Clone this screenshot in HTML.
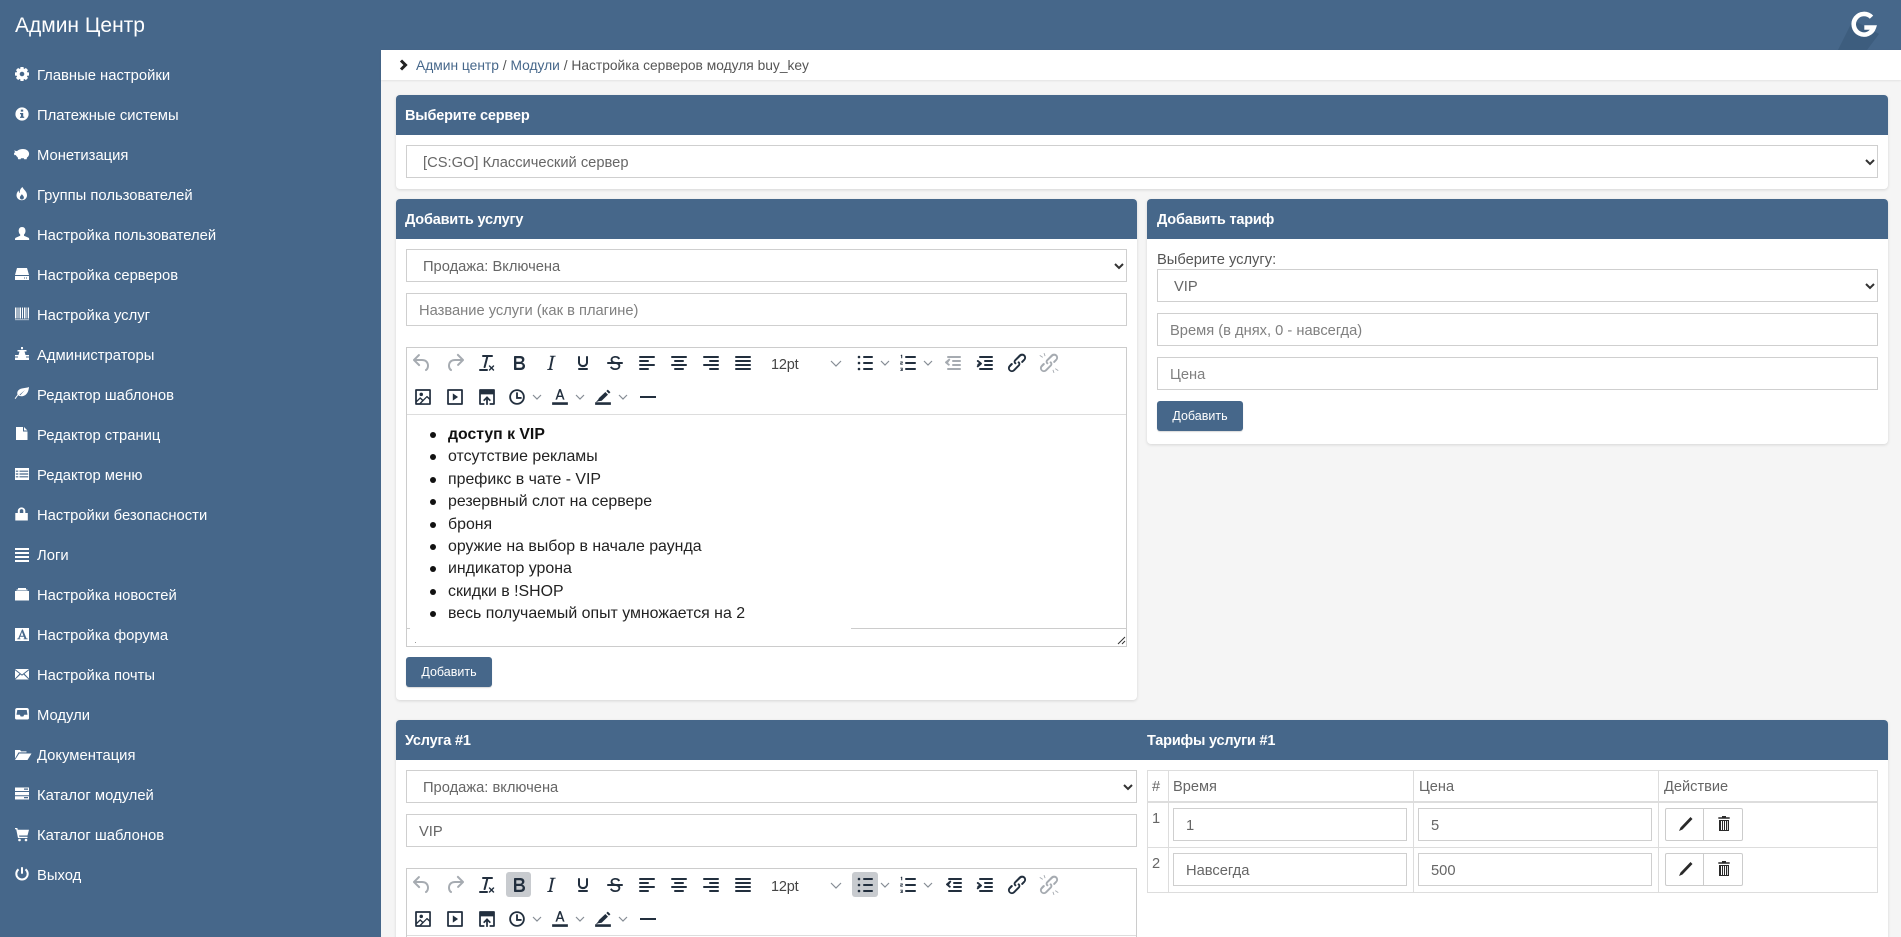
<!DOCTYPE html>
<html lang="ru"><head><meta charset="utf-8"><title>Админ Центр</title>
<style>
*{box-sizing:border-box}
html,body{margin:0;padding:0;width:1901px;height:937px;overflow:hidden;background:#f5f5f5;font-family:"Liberation Sans",sans-serif;font-size:14px;color:#333}
#page{position:relative;width:1901px;height:937px;overflow:hidden;background:#f5f5f5}
.a{position:absolute}
.t{position:absolute;white-space:nowrap;line-height:20px;height:20px}
#side{left:0;top:0;width:381px;height:937px;background:#46678a}
#top{left:0;top:0;width:1901px;height:50px;background:#46678a}
#crumb{left:381px;top:50px;width:1520px;height:30px;background:#fff;box-shadow:0 1px 2px rgba(0,0,0,.08)}
.m{color:#fff;left:37px;font-size:14.8px;margin-top:1px}
.card{position:absolute;background:#fff;border-radius:4px;box-shadow:0 1px 3px rgba(0,0,0,.13)}
.hd{position:absolute;background:#46678a;border-radius:4px 4px 0 0;height:40px}
.h{color:#fff;font-weight:bold;font-size:14.5px;letter-spacing:-.2px;margin-top:1px}
.f{position:absolute;height:33px;background:#fff;border:1px solid #cfcfcf;line-height:33px;padding-top:1px;font-size:14.7px;color:#666;white-space:nowrap}
.ph{color:#808080}
.btn{position:absolute;width:86px;height:30px;background:#46678a;border-radius:3px;color:#fff;font-size:12.5px;line-height:30px;text-align:center;box-shadow:0 1px 1px rgba(0,0,0,.15)}
.ed{position:absolute;border:1px solid #ccc;background:#fff}
.line{position:absolute;background:#ddd}
.li{position:absolute;left:448px;white-space:nowrap;font-size:15.9px;line-height:20px;height:20px;color:#222}
.b{position:absolute;left:430px;width:6px;height:6px;border-radius:50%;background:#111}
.pt{position:absolute;left:771px;font-size:14.5px;color:#444;line-height:20px;letter-spacing:-.2px}
.cell{position:absolute;font-size:14.6px;color:#666;line-height:20px;white-space:nowrap;margin-top:1px}
a{color:#46678a;text-decoration:none}
</style></head><body>
<div id="page">
<div class="a" id="side"></div>
<div class="a" id="top"></div>
<div class="a" id="crumb"></div>

<div class="t" style="left:15px;top:14px;height:24px;line-height:24px;font-size:21px;color:#fff">Админ Центр</div>

<div class="t m" style="top:65px">Главные настройки</div>
<div class="t m" style="top:105px">Платежные системы</div>
<div class="t m" style="top:145px">Монетизация</div>
<div class="t m" style="top:185px">Группы пользователей</div>
<div class="t m" style="top:225px">Настройка пользователей</div>
<div class="t m" style="top:265px">Настройка серверов</div>
<div class="t m" style="top:305px">Настройка услуг</div>
<div class="t m" style="top:345px">Администраторы</div>
<div class="t m" style="top:385px">Редактор шаблонов</div>
<div class="t m" style="top:425px">Редактор страниц</div>
<div class="t m" style="top:465px">Редактор меню</div>
<div class="t m" style="top:505px">Настройки безопасности</div>
<div class="t m" style="top:545px">Логи</div>
<div class="t m" style="top:585px">Настройка новостей</div>
<div class="t m" style="top:625px">Настройка форума</div>
<div class="t m" style="top:665px">Настройка почты</div>
<div class="t m" style="top:705px">Модули</div>
<div class="t m" style="top:745px">Документация</div>
<div class="t m" style="top:785px">Каталог модулей</div>
<div class="t m" style="top:825px">Каталог шаблонов</div>
<div class="t m" style="top:865px">Выход</div>

<div class="t" style="left:416px;top:56px;font-size:13.8px;color:#555"><a href="#">Админ центр</a> / <a href="#">Модули</a> / Настройка серверов модуля buy_key</div>

<!-- card 1 -->
<div class="card" style="left:396px;top:95px;width:1492px;height:94px"></div>
<div class="hd" style="left:396px;top:95px;width:1492px"></div>
<div class="t h" style="left:405px;top:105px">Выберите сервер</div>
<div class="f" style="left:406px;top:145px;width:1472px;padding-left:16px">[CS:GO] Классический сервер</div>

<!-- card 2 -->
<div class="card" style="left:396px;top:199px;width:741px;height:501px"></div>
<div class="hd" style="left:396px;top:199px;width:741px"></div>
<div class="t h" style="left:405px;top:209px">Добавить услугу</div>
<div class="f" style="left:406px;top:249px;width:721px;padding-left:16px">Продажа: Включена</div>
<div class="f ph" style="left:406px;top:293px;width:721px;padding-left:12px">Название услуги (как в плагине)</div>
<div class="ed" style="left:406px;top:347px;width:721px;height:300px"></div>
<div class="line" style="left:407px;top:414px;width:719px;height:1px"></div>
<div class="line" style="left:851px;top:628px;width:275px;height:1px;background:#ccc"></div>
<div class="line" style="left:407px;top:628px;width:3px;height:1px;background:#ccc"></div>
<div class="line" style="left:415px;top:642px;width:1px;height:1px;background:#999"></div>
<div class="pt" style="top:355px">12pt</div>

<div class="b" style="top:432px"></div><div class="li" style="top:425px;font-weight:bold;color:#111;font-size:15.8px">доступ к VIP</div>
<div class="b" style="top:454px"></div><div class="li" style="top:447px">отсутствие рекламы</div>
<div class="b" style="top:477px"></div><div class="li" style="top:470px">префикс в чате - VIP</div>
<div class="b" style="top:499px"></div><div class="li" style="top:492px">резервный слот на сервере</div>
<div class="b" style="top:522px"></div><div class="li" style="top:515px">броня</div>
<div class="b" style="top:544px"></div><div class="li" style="top:537px">оружие на выбор в начале раунда</div>
<div class="b" style="top:566px"></div><div class="li" style="top:559px">индикатор урона</div>
<div class="b" style="top:589px"></div><div class="li" style="top:582px">скидки в !SHOP</div>
<div class="b" style="top:611px"></div><div class="li" style="top:604px">весь получаемый опыт умножается на 2</div>

<div class="btn" style="left:406px;top:657px">Добавить</div>

<!-- card tariff -->
<div class="card" style="left:1147px;top:199px;width:741px;height:245px"></div>
<div class="hd" style="left:1147px;top:199px;width:741px"></div>
<div class="t h" style="left:1157px;top:209px">Добавить тариф</div>
<div class="t" style="left:1157px;top:250px;color:#555;font-size:14.7px">Выберите услугу:</div>
<div class="f" style="left:1157px;top:269px;width:721px;padding-left:16px">VIP</div>
<div class="f ph" style="left:1157px;top:313px;width:721px;padding-left:12px">Время (в днях, 0 - навсегда)</div>
<div class="f ph" style="left:1157px;top:357px;width:721px;padding-left:12px">Цена</div>
<div class="btn" style="left:1157px;top:401px">Добавить</div>

<!-- card 3 -->
<div class="card" style="left:396px;top:720px;width:1492px;height:240px"></div>
<div class="hd" style="left:396px;top:720px;width:1492px"></div>
<div class="t h" style="left:405px;top:730px">Услуга #1</div>
<div class="t h" style="left:1147px;top:730px">Тарифы услуги #1</div>
<div class="f" style="left:406px;top:770px;width:731px;padding-left:16px">Продажа: включена</div>
<div class="f" style="left:406px;top:814px;width:731px;padding-left:12px">VIP</div>
<div class="ed" style="left:406px;top:868px;width:731px;height:90px"></div>
<div class="line" style="left:407px;top:935px;width:729px;height:1px"></div>
<div class="a" style="left:506px;top:872px;width:25px;height:25px;background:#c8cbcf;border-radius:3px"></div>
<div class="a" style="left:852px;top:872px;width:26px;height:25px;background:#c8cbcf;border-radius:3px"></div>
<div class="pt" style="top:877px">12pt</div>

<!-- table -->
<div class="a" style="left:1147px;top:770px;width:731px;height:123px;border:1px solid #ddd"></div>
<div class="line" style="left:1147px;top:801px;width:731px;height:2px"></div>
<div class="line" style="left:1147px;top:847px;width:731px;height:1px"></div>
<div class="line" style="left:1168px;top:770px;width:1px;height:123px"></div>
<div class="line" style="left:1413px;top:770px;width:1px;height:123px"></div>
<div class="line" style="left:1658px;top:770px;width:1px;height:123px"></div>
<div class="cell" style="left:1152px;top:776px">#</div>
<div class="cell" style="left:1173px;top:776px">Время</div>
<div class="cell" style="left:1419px;top:776px">Цена</div>
<div class="cell" style="left:1664px;top:776px">Действие</div>
<div class="cell" style="left:1152px;top:808px">1</div>
<div class="cell" style="left:1152px;top:853px">2</div>
<div class="f" style="left:1173px;top:808px;width:234px;padding-left:12px">1</div>
<div class="f" style="left:1418px;top:808px;width:234px;padding-left:12px">5</div>
<div class="f" style="left:1173px;top:853px;width:234px;padding-left:12px">Навсегда</div>
<div class="f" style="left:1418px;top:853px;width:234px;padding-left:12px">500</div>
<div class="a" style="left:1665px;top:808px;width:78px;height:33px;border:1px solid #ccc;border-radius:2px;background:#fff"></div>
<div class="line" style="left:1703px;top:808px;width:1px;height:33px;background:#ccc"></div>
<div class="a" style="left:1665px;top:853px;width:78px;height:33px;border:1px solid #ccc;border-radius:2px;background:#fff"></div>
<div class="line" style="left:1703px;top:853px;width:1px;height:33px;background:#ccc"></div>

<svg class="a" style="left:0;top:0" width="1901" height="937" viewBox="0 0 1901 937" xmlns="http://www.w3.org/2000/svg">
<defs>
<symbol id="undo" viewBox="0 0 24 24"><path d="M6.4 8H12c3.7 0 6.2 2 6.8 5.1.6 2.7-.4 5.6-2.3 6.8a1 1 0 0 1-1-1.8c1.1-.6 1.8-2.7 1.4-4.6-.5-2.1-2.1-3.5-4.9-3.5H6.4l3.3 3.3a1 1 0 1 1-1.4 1.4l-5-5a1 1 0 0 1 0-1.4l5-5a1 1 0 0 1 1.4 1.4L6.4 8z"/></symbol>
<symbol id="redo" viewBox="0 0 24 24"><path d="M17.6 10H12c-2.8 0-4.4 1.4-4.9 3.5-.4 2 .3 4 1.4 4.6a1 1 0 1 1-1 1.8c-2-1.2-2.9-4.1-2.3-6.8.6-3 3-5.1 6.8-5.1h5.6l-3.3-3.3a1 1 0 1 1 1.4-1.4l5 5a1 1 0 0 1 0 1.4l-5 5a1 1 0 0 1-1.4-1.4l3.3-3.3z"/></symbol>
<symbol id="tx" viewBox="0 0 24 24"><path d="M13.2 6a1 1 0 0 1 0 .2l-2.6 10a1 1 0 0 1-1 .8h-.2a.8.8 0 0 1-.8-1l2.6-10H8a1 1 0 1 1 0-2h9a1 1 0 0 1 0 2h-3.8zM5 18h7a1 1 0 0 1 0 2H5a1 1 0 0 1 0-2zm13 1.5L16.5 18 15 19.5a.7.7 0 0 1-1-1l1.5-1.5-1.5-1.5a.7.7 0 0 1 1-1l1.5 1.5 1.5-1.5a.7.7 0 0 1 1 1L17.5 17l1.5 1.5a.7.7 0 0 1-1 1z"/></symbol>
<symbol id="bold" viewBox="0 0 24 24"><path d="M7.800 19c-.3 0-.5 0-.6-.2l-.2-.5V5.700c0-.2 0-.4.2-.5l.6-.2h5c1.500 0 2.700.3 3.500 1 .7.6 1.100 1.400 1.100 2.500a3 3 0 0 1-.6 1.900c-.4.6-1 1-1.600 1.200.4.1.9.3 1.300.6s.8.7 1 1.200c.4.4.5 1 .5 1.600 0 1.300-.4 2.300-1.300 3-.8.7-2.100 1-3.800 1H7.800zm1.500-8.300h3.500c.6 0 1.200-.1 1.600-.5.4-.3.6-.7.6-1.300 0-1.100-.8-1.700-2.300-1.700H9.300zm.1 6h3.900c.7 0 1.300-.1 1.700-.4.4-.4.6-.9.6-1.500s-.2-1-.7-1.400c-.4-.3-1-.4-2-.4H9.400z"/></symbol>
<symbol id="ital" viewBox="0 0 24 24"><path d="M16.700 4.700l-.1.9h-.3c-.6 0-1 0-1.400.3-.3.3-.4.6-.5 1.100l-2.100 9.800v.6c0 .5.4.8 1.400.8h.2l-.2.8H8l.2-.8h.2c1.100 0 1.800-.5 2-1.500l2-9.800.1-.5c0-.6-.4-.8-1.400-.8h-.3l.2-.9h5.800z"/></symbol>
<symbol id="und" viewBox="0 0 24 24"><path d="M16 5c.6 0 1 .4 1 1v5.500a4 4 0 0 1-.4 1.800l-1 1.400a5.300 5.300 0 0 1-5.500 1 5 5 0 0 1-1.600-1c-.5-.4-.8-.9-1.100-1.400a4 4 0 0 1-.4-1.800V6c0-.6.4-1 1-1s1 .4 1 1v5.500c0 .3 0 .6.2 1l.6.7a3.300 3.300 0 0 0 2.200.8 3.400 3.400 0 0 0 2.200-.8c.3-.2.4-.5.6-.8l.2-.9V6c0-.6.4-1 1-1zM8 17h8c.6 0 1 .4 1 1s-.4 1-1 1H8a1 1 0 0 1 0-2z"/></symbol>
<symbol id="strk" viewBox="0 0 24 24"><path d="M15.600 8.500c-.5-.7-1-1.100-1.300-1.300-.6-.4-1.300-.6-2-.6-2.700 0-2.800 1.700-2.800 2.100 0 1.600 1.800 2 3.200 2.300 4.400.9 4.600 2.800 4.600 3.900 0 1.400-.7 4.100-5 4.100A6.200 6.200 0 0 1 7 16.400l1.500-1.100c.4.6 1.600 2 3.700 2 1.600 0 2.500-.4 3-1.200.4-.8.3-2-.8-2.600-.7-.4-1.600-.7-2.900-1-1-.2-3.900-.8-3.900-3.600C7.600 6 10.300 5 12.400 5c2.900 0 4.200 1.600 4.700 2.400l-1.500 1.100z"/><path d="M5 11h14a1 1 0 0 1 0 2H5a1 1 0 0 1 0-2z"/></symbol>
<symbol id="al" viewBox="0 0 24 24"><path d="M5 5h14c.6 0 1 .4 1 1s-.4 1-1 1H5a1 1 0 1 1 0-2zm0 4h8c.6 0 1 .4 1 1s-.4 1-1 1H5a1 1 0 1 1 0-2zm0 8h8c.6 0 1 .4 1 1s-.4 1-1 1H5a1 1 0 0 1 0-2zm0-4h14c.6 0 1 .4 1 1s-.4 1-1 1H5a1 1 0 0 1 0-2z"/></symbol>
<symbol id="ac" viewBox="0 0 24 24"><path d="M5 5h14c.6 0 1 .4 1 1s-.4 1-1 1H5a1 1 0 1 1 0-2zm3 4h8c.6 0 1 .4 1 1s-.4 1-1 1H8a1 1 0 1 1 0-2zm0 8h8c.6 0 1 .4 1 1s-.4 1-1 1H8a1 1 0 0 1 0-2zm-3-4h14c.6 0 1 .4 1 1s-.4 1-1 1H5a1 1 0 0 1 0-2z"/></symbol>
<symbol id="ar" viewBox="0 0 24 24"><path d="M5 5h14c.6 0 1 .4 1 1s-.4 1-1 1H5a1 1 0 1 1 0-2zm6 4h8c.6 0 1 .4 1 1s-.4 1-1 1h-8a1 1 0 0 1 0-2zm0 8h8c.6 0 1 .4 1 1s-.4 1-1 1h-8a1 1 0 0 1 0-2zm-6-4h14c.6 0 1 .4 1 1s-.4 1-1 1H5a1 1 0 0 1 0-2z"/></symbol>
<symbol id="aj" viewBox="0 0 24 24"><path d="M5 5h14c.6 0 1 .4 1 1s-.4 1-1 1H5a1 1 0 1 1 0-2zm0 4h14c.6 0 1 .4 1 1s-.4 1-1 1H5a1 1 0 1 1 0-2zm0 4h14c.6 0 1 .4 1 1s-.4 1-1 1H5a1 1 0 0 1 0-2zm0 4h14c.6 0 1 .4 1 1s-.4 1-1 1H5a1 1 0 0 1 0-2z"/></symbol>
<symbol id="ul" viewBox="0 0 24 24"><path d="M11 5h8c.6 0 1 .4 1 1s-.4 1-1 1h-8a1 1 0 0 1 0-2zm0 6h8c.6 0 1 .4 1 1s-.4 1-1 1h-8a1 1 0 0 1 0-2zm0 6h8c.6 0 1 .4 1 1s-.4 1-1 1h-8a1 1 0 0 1 0-2z"/><circle cx="6" cy="6" r="1.300"/><circle cx="6" cy="12" r="1.300"/><circle cx="6" cy="18" r="1.300"/></symbol>
<symbol id="ol" viewBox="0 0 24 24"><path d="M10 5h9c.6 0 1 .4 1 1s-.4 1-1 1h-9a1 1 0 0 1 0-2zm0 6h9c.6 0 1 .4 1 1s-.4 1-1 1h-9a1 1 0 0 1 0-2zm0 6h9c.6 0 1 .4 1 1s-.4 1-1 1h-9a1 1 0 0 1 0-2z"/><path d="M5.200 3.800h1v3.400h-1V4.900h-.7zM4.300 10.500h2.400v1.800H5.300v.6h1.500v.7H4.300v-1.900h1.500v-.5H4.300zM4.300 16.800h2.400v3.200H4.300v-.7h1.500v-.6H4.900v-.7h.9v-.5H4.300z"/></symbol>
<symbol id="outd" viewBox="0 0 24 24"><path d="M7 5h12c.6 0 1 .4 1 1s-.4 1-1 1H7a1 1 0 1 1 0-2zm5 4h7c.6 0 1 .4 1 1s-.4 1-1 1h-7a1 1 0 0 1 0-2zm0 4h7c.6 0 1 .4 1 1s-.4 1-1 1h-7a1 1 0 0 1 0-2zm-5 4h12a1 1 0 0 1 0 2H7a1 1 0 0 1 0-2zm1.600-3.900a1 1 0 0 1-1.200 1.500l-3-2.500a1 1 0 0 1 0-1.500l3-2.500a1 1 0 1 1 1.200 1.500L7 12l1.600 1.100z"/></symbol>
<symbol id="ind" viewBox="0 0 24 24"><path d="M7 5h12c.6 0 1 .4 1 1s-.4 1-1 1H7a1 1 0 1 1 0-2zm5 4h7c.6 0 1 .4 1 1s-.4 1-1 1h-7a1 1 0 0 1 0-2zm0 4h7c.6 0 1 .4 1 1s-.4 1-1 1h-7a1 1 0 0 1 0-2zm-5 4h12a1 1 0 0 1 0 2H7a1 1 0 0 1 0-2zm-2.600-3.900L6 12l-1.600-1.100a1 1 0 1 1 1.200-1.500l3 2.500a1 1 0 0 1 0 1.500l-3 2.500a1 1 0 1 1-1.200-1.500z"/></symbol>
<symbol id="link" viewBox="0 0 24 24"><path d="M6.200 12.300a1 1 0 0 1 1.400 1.400l-2 2a2 2 0 1 0 2.800 2.800l4.800-4.800a1 1 0 0 0 0-1.400 1 1 0 1 1 1.300-1.400 3 3 0 0 1 .1 4.100l-4.800 4.900a4 4 0 0 1-5.700-5.700l2-2.100zm11.600-.6a1 1 0 0 1-1.400-1.400l2-2a2 2 0 1 0-2.800-2.800L10.800 10a1 1 0 0 0 0 1.400 1 1 0 1 1-1.300 1.400 3 3 0 0 1-.1-4.100l4.800-4.900a4 4 0 0 1 5.700 5.700l-2 2.100z"/></symbol>
<symbol id="unlink" viewBox="0 0 24 24"><path d="M6.200 12.300a1 1 0 0 1 1.400 1.400l-2 2a2 2 0 1 0 2.800 2.800l4.800-4.800a1 1 0 0 0 0-1.400 1 1 0 1 1 1.300-1.400 3 3 0 0 1 .1 4.100l-4.800 4.900a4 4 0 0 1-5.700-5.700l2-2.100zm11.600-.6a1 1 0 0 1-1.400-1.400l2-2a2 2 0 1 0-2.800-2.800L10.800 10a1 1 0 0 0 0 1.400 1 1 0 1 1-1.300 1.400 3 3 0 0 1-.1-4.100l4.800-4.900a4 4 0 0 1 5.700 5.700l-2 2.100z"/><path d="M3 4l3 2-.5.8-3-2zM7.500 2l1 3-.9.3-1-3zM21 20l-3-2 .5-.8 3 2zM16.500 22l-1-3 .9-.3 1 3z"/></symbol>
<symbol id="img" viewBox="0 0 24 24"><path d="M5 15.700l3.300-3.200c.3-.3.7-.3 1 0L12 15l4.100-4c.3-.4.8-.4 1 0l2 1.900V5H5v10.700zM5 18V19h3l2.800-2.900-2-2L5 17.900zm14-3l-2.500-2.400-6.400 6.500H19v-4zM4 3h16c.6 0 1 .4 1 1v16c0 .6-.4 1-1 1H4a1 1 0 0 1-1-1V4c0-.6.4-1 1-1zm6 8a2 2 0 1 0 0-4 2 2 0 0 0 0 4z"/></symbol>
<symbol id="vid" viewBox="0 0 24 24"><path d="M4 3h16c.6 0 1 .4 1 1v16c0 .6-.4 1-1 1H4a1 1 0 0 1-1-1V4c0-.6.4-1 1-1zm1 2v14h14V5H5zm4.500 2.800L15.500 12l-6 4.200z" fill-rule="evenodd"/></symbol>
<symbol id="upl" viewBox="0 0 24 24"><path d="M4 3h16c.6 0 1 .4 1 1v16c0 .6-.4 1-1 1h-5v-2h4V9H5v10h4v2H4a1 1 0 0 1-1-1V4c0-.6.4-1 1-1zm8 8l4.500 4.500-1.400 1.400-2.100-2.100V21h-2v-6.200l-2.100 2.100-1.400-1.400z"/></symbol>
<symbol id="clk" viewBox="0 0 24 24"><path d="M12 3.500a8.500 8.500 0 1 1 0 17 8.500 8.500 0 0 1 0-17zm0 2a6.500 6.500 0 1 0 0 13 6.500 6.500 0 0 0 0-13zM11 7h2v5h4v2h-6z" fill-rule="evenodd"/></symbol>
<symbol id="col" viewBox="0 0 24 24"><path d="M3 18h18v3H3z"/><path d="M11 3h2l4.200 12h-1.900l-1-3H9.700l-1 3H6.800zm-.8 7.400h3.600L12 5.600z" fill-rule="evenodd"/></symbol>
<symbol id="hl" viewBox="0 0 24 24"><path d="M3 18h18v3H3z"/><path d="M17.500 3.500l3 3-1.700 1.700-3-3zM14.700 6.300l3 3-7.200 7-4.500.7-.8.8H4l2.700-3.300.7-1.300z"/></symbol>
<symbol id="hr" viewBox="0 0 24 24"><path d="M4 11h16v2H4z"/></symbol>
<g id="row1">
<use href="#undo" x="410" y="351" width="24" height="24" fill="#222f3e" opacity=".4"/>
<use href="#redo" x="443" y="351" width="24" height="24" fill="#222f3e" opacity=".4"/>
<use href="#tx" x="475" y="351" width="24" height="24" fill="#222f3e"/>
<use href="#bold" x="507" y="351" width="24" height="24" fill="#222f3e"/>
<use href="#ital" x="539" y="351" width="24" height="24" fill="#222f3e"/>
<use href="#und" x="571" y="351" width="24" height="24" fill="#222f3e"/>
<use href="#strk" x="603" y="351" width="24" height="24" fill="#222f3e"/>
<use href="#al" x="635" y="351" width="24" height="24" fill="#222f3e"/>
<use href="#ac" x="667" y="351" width="24" height="24" fill="#222f3e"/>
<use href="#ar" x="699" y="351" width="24" height="24" fill="#222f3e"/>
<use href="#aj" x="731" y="351" width="24" height="24" fill="#222f3e"/>
<path d="M831 361l5 5 5-5M881 361l4 4 4-4M924 361l4 4 4-4" fill="none" stroke="#222f3e" stroke-opacity=".55" stroke-width="1.200"/>
<use href="#ul" x="853" y="351" width="24" height="24" fill="#222f3e"/>
<use href="#ol" x="896" y="351" width="24" height="24" fill="#222f3e"/>
<use href="#ind" x="973" y="351" width="24" height="24" fill="#222f3e"/>
<use href="#link" x="1005" y="351" width="24" height="24" fill="#222f3e"/>
<use href="#unlink" x="1037" y="351" width="24" height="24" fill="#222f3e" opacity=".4"/>
<use href="#img" x="412.500" y="386.500" width="21" height="21" fill="#222f3e"/>
<use href="#vid" x="444.500" y="386.500" width="21" height="21" fill="#222f3e"/>
<use href="#upl" x="476.500" y="386.500" width="21" height="21" fill="#222f3e"/>
<use href="#clk" x="506" y="386" width="22" height="22" fill="#222f3e"/>
<use href="#col" x="549.500" y="386.500" width="21" height="21" fill="#222f3e"/>
<use href="#hl" x="592.500" y="386.500" width="21" height="21" fill="#222f3e"/>
<use href="#hr" x="636" y="385" width="24" height="24" fill="#222f3e"/>
<path d="M533 395l4 4 4-4M576 395l4 4 4-4M619 395l4 4 4-4" fill="none" stroke="#222f3e" stroke-opacity=".55" stroke-width="1.200"/>
</g>
</defs>

<!-- toolbars -->
<use href="#row1"/>
<use href="#outd" x="941" y="351" width="24" height="24" fill="#222f3e" opacity=".4"/>
<use href="#row1" y="522"/>
<use href="#outd" x="942" y="873" width="24" height="24" fill="#222f3e"/>

<!-- resize grip -->
<path d="M1118 644l7-7M1122 644l3-3" stroke="#333" stroke-width="1"/>

<!-- logo -->
<path d="M1838 50l15-30 26 14-12 16z" fill="#3d5d7e"/>
<path d="M1871.500 17.200A10.300 10.300 0 1 0 1873.800 27.500h-9.500" fill="none" stroke="#fff" stroke-width="4.600"/>

<!-- select chevrons -->
<g fill="none" stroke="#333" stroke-width="2">
<path d="M1866 160l4 4 4-4"/>
<path d="M1115 264l4 4 4-4"/>
<path d="M1866 284l4 4 4-4"/>
<path d="M1124 785l4 4 4-4"/>
</g>

<!-- breadcrumb chevron -->
<path d="M401 60.500l4.500 4.500-4.500 4.500" fill="none" stroke="#222" stroke-width="3"/>

<!-- sidebar icons -->
<g fill="#fff" transform="translate(0 -1)">
<g transform="translate(22 75)"><circle r="4" fill="none" stroke="#fff" stroke-width="3.400"/><path d="M-1.600-7h3.200v3h-3.200zM-1.600 4h3.200v3h-3.200zM-7-1.600h3v3.200h-3zM4-1.600h3v3.200H4z"/><path d="M-1.600-7h3.200v3h-3.200zM-1.600 4h3.200v3h-3.200zM-7-1.600h3v3.200h-3zM4-1.600h3v3.200H4z" transform="rotate(45)"/></g>
<circle cx="22" cy="115" r="6.600"/>
<path d="M20.800 110.600h2.400v2h-2.400zM20 114h3.200v3.600h1v1.300h-4.200v-1.300h1v-2.300h-1z" fill="#46678a"/>
<path d="M14 151.500l3 .6c1.600-1.600 3.800-2.100 6-2.100 3 0 5.500 1.500 6 4 .4 2-.6 3.600-2 4.500l-.4 1.800h-2.400l-.4-1H21l-.4 1h-2.400l-.6-2.200c-.8-.5-1.300-1.200-1.700-2H14.300l-.3-2.200 1.300-.6z"/>
<path d="M22.500 188c.7 2.500 4.500 4 4.500 8.300 0 3-2.400 5-5.200 5-3.200 0-5.300-2.300-5.300-5 0-2.200 1.100-3.700 2.100-4.800.1 1.400.6 2.300 1.300 2.600-.4-2.200.3-4.500 2.600-6.100zM21.900 195c-.4 1.300-2 2-2 3.600 0 1.200.9 1.900 2 1.900s2-.8 2-1.900c0-1.700-1.500-2.200-2-3.600z" fill-rule="evenodd"/>
<path d="M22 228c2.300 0 3.500 1.600 3.500 4 0 1.400-.6 2.800-1.500 3.500v1.300l4.500 1.900c.6.300.7 1 .7 2.300H15c0-1.300.1-2 .7-2.300l4.500-1.900v-1.300c-.9-.7-1.500-2.100-1.500-3.500 0-2.400 1.200-4 3.300-4z"/>
<path d="M17 269h10l2 7H15zM15 277h14v4H15z"/><path d="M24 278.500h1v1h-1zM26 278.500h1v1h-1z" fill="#46678a"/>
<path d="M15 308.500h1.500v11H15zM17.500 308.500h1v11h-1zM19.500 308.500h1.500v11h-1.500zM22 308.500h1v11h-1zM24 308.500h1.500v11H24zM26.500 308.500h.8v11h-.8zM28 308.500h1v11h-1z"/><path d="M15 320.500h14v.6H15z"/>
<path d="M21 348h2v2.200h-2zM17.500 351h9v1.500h-2l1 3.500H29v1.500H26v1H29v2.500H15v-2.500h3v-1h-3V356h3.500l1-3.500h-2z"/>
<path d="M29 388c-.4 4.500-2.200 8.500-6.500 9.200-1.800.3-3.300-.1-4.300-.9L15.500 400l-.8-.6 2.800-3.800c-.5-1.300-.3-3 .9-4.300 2.300-2.500 6.800-1.900 10.600-3.300zm-4 3l-5.500 4.800.7.500z" fill-rule="evenodd"/>
<path d="M16 428h7v4.500h4.500V441H16zM24 428l3.500 3.500H24z"/>
<path d="M15 469h14v12H15zM15.800 471.600h2.500v1.200h-2.500zM19.500 471.600h8.700v1.200h-8.700zM15.800 474.400h2.500v1.200h-2.500zM19.500 474.400h8.700v1.200h-8.700zM15.800 477.200h2.500v1.200h-2.500zM19.500 477.200h8.700v1.200h-8.700z" fill-rule="evenodd"/>
<path d="M15.300 514h12.500v7.500H15.300zM17.800 514v-2.500a3.800 3.800 0 0 1 7.500 0V514h-2v-2.500a1.800 1.800 0 0 0-3.500 0V514z"/>
<path d="M15 549h14v2H15zM15 553h14v2H15zM15 557h14v2H15zM15 561h14v2H15z"/>
<path d="M18 589h8v1.500H18zM15 592h14v9.500H15z"/><path d="M16.500 590.500h11v1h-11z"/>
<path d="M15 629h14v13H15zM22 630.500l-3.800 9h-1v.8h3.200v-.8h-.9l.6-1.700h3.800l.6 1.700h-.9v.8h4v-.8h-1.100l-3.600-9zM22 633l1.400 3.800h-2.800z" fill-rule="evenodd"/>
<path d="M15 670h14l-7 5.500zM15 671.300l4.500 3.500L15 679.500zM29 671.300l-4.500 3.500 4.500 4.700zM20.500 675.500l1.500 1.200 1.500-1.200 5.200 5H15.300z"/>
<path d="M17 709h10c.9 0 1.500.6 1.800 1.500L29 719c0 1-.7 1.500-1.500 1.500h-11c-.8 0-1.500-.5-1.500-1.500l.2-8.500c.3-.9.900-1.500 1.800-1.500zm.3 2l-.8 4.800h3.300l.9 1.700h2.600l.9-1.700h3.300L26.700 711z" fill-rule="evenodd"/>
<path d="M15 751h5l1.200 1.400h5.300v1H18.500L15 759.500zM19.200 754.500H31.500L27.500 761H15z"/>
<path d="M15 788.500h14v3.500H15zM15 793h14v3.200H15zM15 797.200h14v3.300H15z"/><path d="M24 789.500h4v1.300h-4zM24 798h4v1.300h-4z" fill="#46678a"/>
<path d="M15 829h2.300l.5 1.800H29l-1.500 5.700h-8.500l.3 1.200H27.500V839H18l-1.800-8.700H15z"/><circle cx="19.500" cy="841" r="1.300"/><circle cx="26" cy="841" r="1.300"/>
<path d="M18.500 870.300a5.700 5.700 0 1 0 7 0" fill="none" stroke="#fff" stroke-width="2"/><path d="M21 868.200h2v6.500h-2z"/>
</g>

<!-- pencil & trash -->
<g fill="#2a2a2a">
<path id="pn" d="M1690.500 817l2 2-10 10.500-3.500 1.500 1.500-3.500z"/>
<use href="#pn" y="45"/>
<path id="tr1" d="M1722 816h4v1.200h3.700v1.600H1718.300v-1.600h3.700zM1719 820h10v11h-10zM1721 821v9h1v-9zM1723 821v9h1v-9zM1725 821v9h1v-9zM1727 821v9h.8v-9z" fill-rule="evenodd"/>
<use href="#tr1" y="45"/>
</g>
</svg>
</div>
</body></html>
